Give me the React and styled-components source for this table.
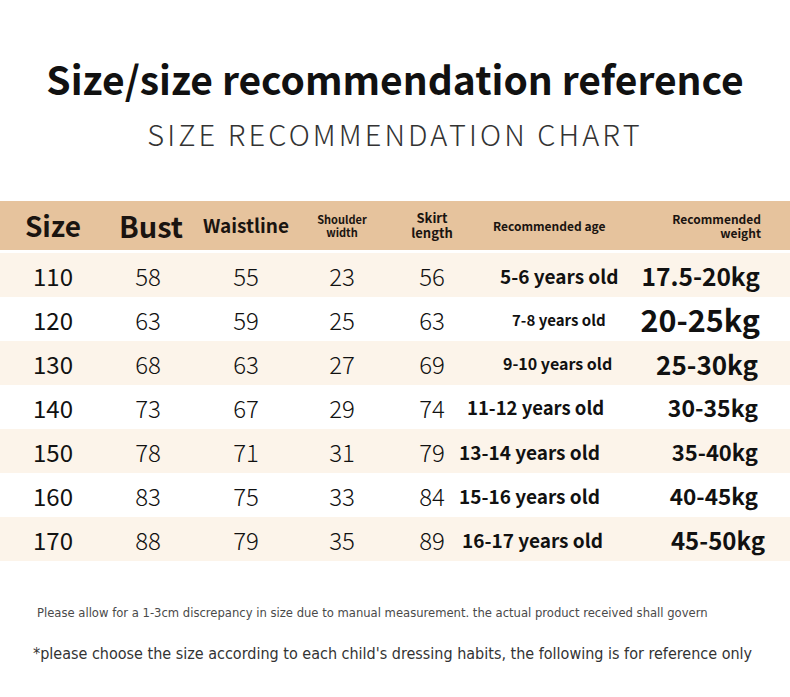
import React from "react";
import styled, { createGlobalStyle } from "styled-components";

const Global = createGlobalStyle`
  html, body { margin: 0; padding: 0; background: #fff; }
  body { font-family: "Noto Sans CJK SC", "Noto Sans", sans-serif; color: #111; }
`;

const Page = styled.div`
  width: 790px;
  height: 697px;
  background: #fff;
  display: flex;
  flex-direction: column;
  align-items: stretch;
  overflow: hidden;
`;

const Title = styled.h1`
  margin: 52px 0 0;
  text-align: center;
  font-size: 39px;
  line-height: 52px;
  font-weight: 700;
  color: #111;
`;

const Subtitle = styled.h2`
  margin: 9px 0 0;
  text-align: center;
  font-size: 29px;
  line-height: 40px;
  font-weight: 300;
  letter-spacing: 3.1px;
  color: #333;
`;

const Table = styled.div`
  margin-top: 48px;
  display: grid;
  grid-template-columns: 106px 84px 112px 80px 73px 181px 1fr;
  grid-template-rows: 52px;
  grid-auto-rows: 44px;
`;

const HeaderRow = styled.div`
  display: contents;
`;

const Row = styled.div`
  display: contents;
`;

const Cell = styled.div`
  display: flex;
  align-items: center;
  justify-content: ${(p) => p.$justify || "center"};
  padding-left: ${(p) => p.$pl || 0}px;
  padding-right: ${(p) => p.$pr || 0}px;
  background: ${(p) => (p.$bg ? p.$bg : "transparent")};
  white-space: nowrap;
`;

const HeadCell = styled(Cell)`
  height: 49px;
  align-self: start;
  background: #e6c39d;
  font-weight: 700;
  color: #1a1410;
  font-size: ${(p) => p.$size}px;
  line-height: ${(p) => (p.$size < 14 ? 1.15 : 1.2)};
  text-align: ${(p) => p.$align || "center"};
`;

const Num = styled.span`
  font-size: 24px;
  font-weight: ${(p) => (p.$strong ? 400 : 300)};
  color: #111;
`;

const Age = styled.span`
  font-size: ${(p) => p.$size}px;
  font-weight: 700;
  color: #111;
`;

const Weight = styled.span`
  font-size: ${(p) => p.$size}px;
  font-weight: 700;
  color: #111;
`;

const Notes = styled.div`
  margin-top: 44px;
  display: flex;
  flex-direction: column;
  gap: 23px;
  font-family: "DejaVu Sans Condensed", "DejaVu Sans", sans-serif;
  font-stretch: condensed;
`;

const Note = styled.p`
  margin: 0;
  padding-left: ${(p) => p.$pl}px;
  font-size: ${(p) => p.$size}px;
  line-height: ${(p) => p.$lh}px;
  color: ${(p) => p.$color};
`;

const rows = [
  ["110", "58", "55", "23", "56", "5-6 years old", 19, 45, "17.5-20kg", 24.5, 30],
  ["120", "63", "59", "25", "63", "7-8 years old", 15, 57, "20-25kg", 30.5, 30],
  ["130", "68", "63", "27", "69", "9-10 years old", 16, 48, "25-30kg", 26, 32],
  ["140", "73", "67", "29", "74", "11-12 years old", 18.5, 12, "30-35kg", 23, 32],
  ["150", "78", "71", "31", "79", "13-14 years old", 19, 4, "35-40kg", 22, 32],
  ["160", "83", "75", "33", "84", "15-16 years old", 19, 4, "40-45kg", 22.5, 32],
  ["170", "88", "79", "35", "89", "16-17 years old", 19, 7, "45-50kg", 24, 25],
];

export default function App() {
  return (
    <Page>
      <Global />
      <Title>Size/size recommendation reference</Title>
      <Subtitle>SIZE RECOMMENDATION CHART</Subtitle>
      <Table>
        <HeaderRow>
          <HeadCell $size={28}>Size</HeadCell>
          <HeadCell $size={29} $pl={6}>Bust</HeadCell>
          <HeadCell $size={19}>Waistline</HeadCell>
          <HeadCell $size={11}>
            Shoulder
            <br />
            width
          </HeadCell>
          <HeadCell $size={13} $pl={27}>
            Skirt
            <br />
            length
          </HeadCell>
          <HeadCell $size={12} $justify="flex-start" $pl={38}>
            Recommended age
          </HeadCell>
          <HeadCell $size={12} $justify="flex-end" $pr={29} $align="right">
            Recommended
            <br />
            weight
          </HeadCell>
        </HeaderRow>
        {rows.map((r, i) => {
          const bg = i % 2 === 0 ? "#fcf4ea" : "#ffffff";
          return (
            <Row key={r[0]}>
              <Cell $bg={bg}>
                <Num $strong>{r[0]}</Num>
              </Cell>
              <Cell $bg={bg}>
                <Num>{r[1]}</Num>
              </Cell>
              <Cell $bg={bg}>
                <Num>{r[2]}</Num>
              </Cell>
              <Cell $bg={bg}>
                <Num>{r[3]}</Num>
              </Cell>
              <Cell $bg={bg} $pl={27}>
                <Num>{r[4]}</Num>
              </Cell>
              <Cell $bg={bg} $justify="flex-start" $pl={r[7]}>
                <Age $size={r[6]}>{r[5]}</Age>
              </Cell>
              <Cell $bg={bg} $justify="flex-end" $pr={r[10]}>
                <Weight $size={r[9]}>{r[8]}</Weight>
              </Cell>
            </Row>
          );
        })}
      </Table>
      <Notes>
        <Note $pl={37} $size={12.9} $lh={16} $color="#4a4a4a">
          Please allow for a 1-3cm discrepancy in size due to manual measurement. the actual product received shall govern
        </Note>
        <Note $pl={33} $size={16} $lh={20} $color="#333">
          *please choose the size according to each child's dressing habits, the following is for reference only
        </Note>
      </Notes>
    </Page>
  );
}
